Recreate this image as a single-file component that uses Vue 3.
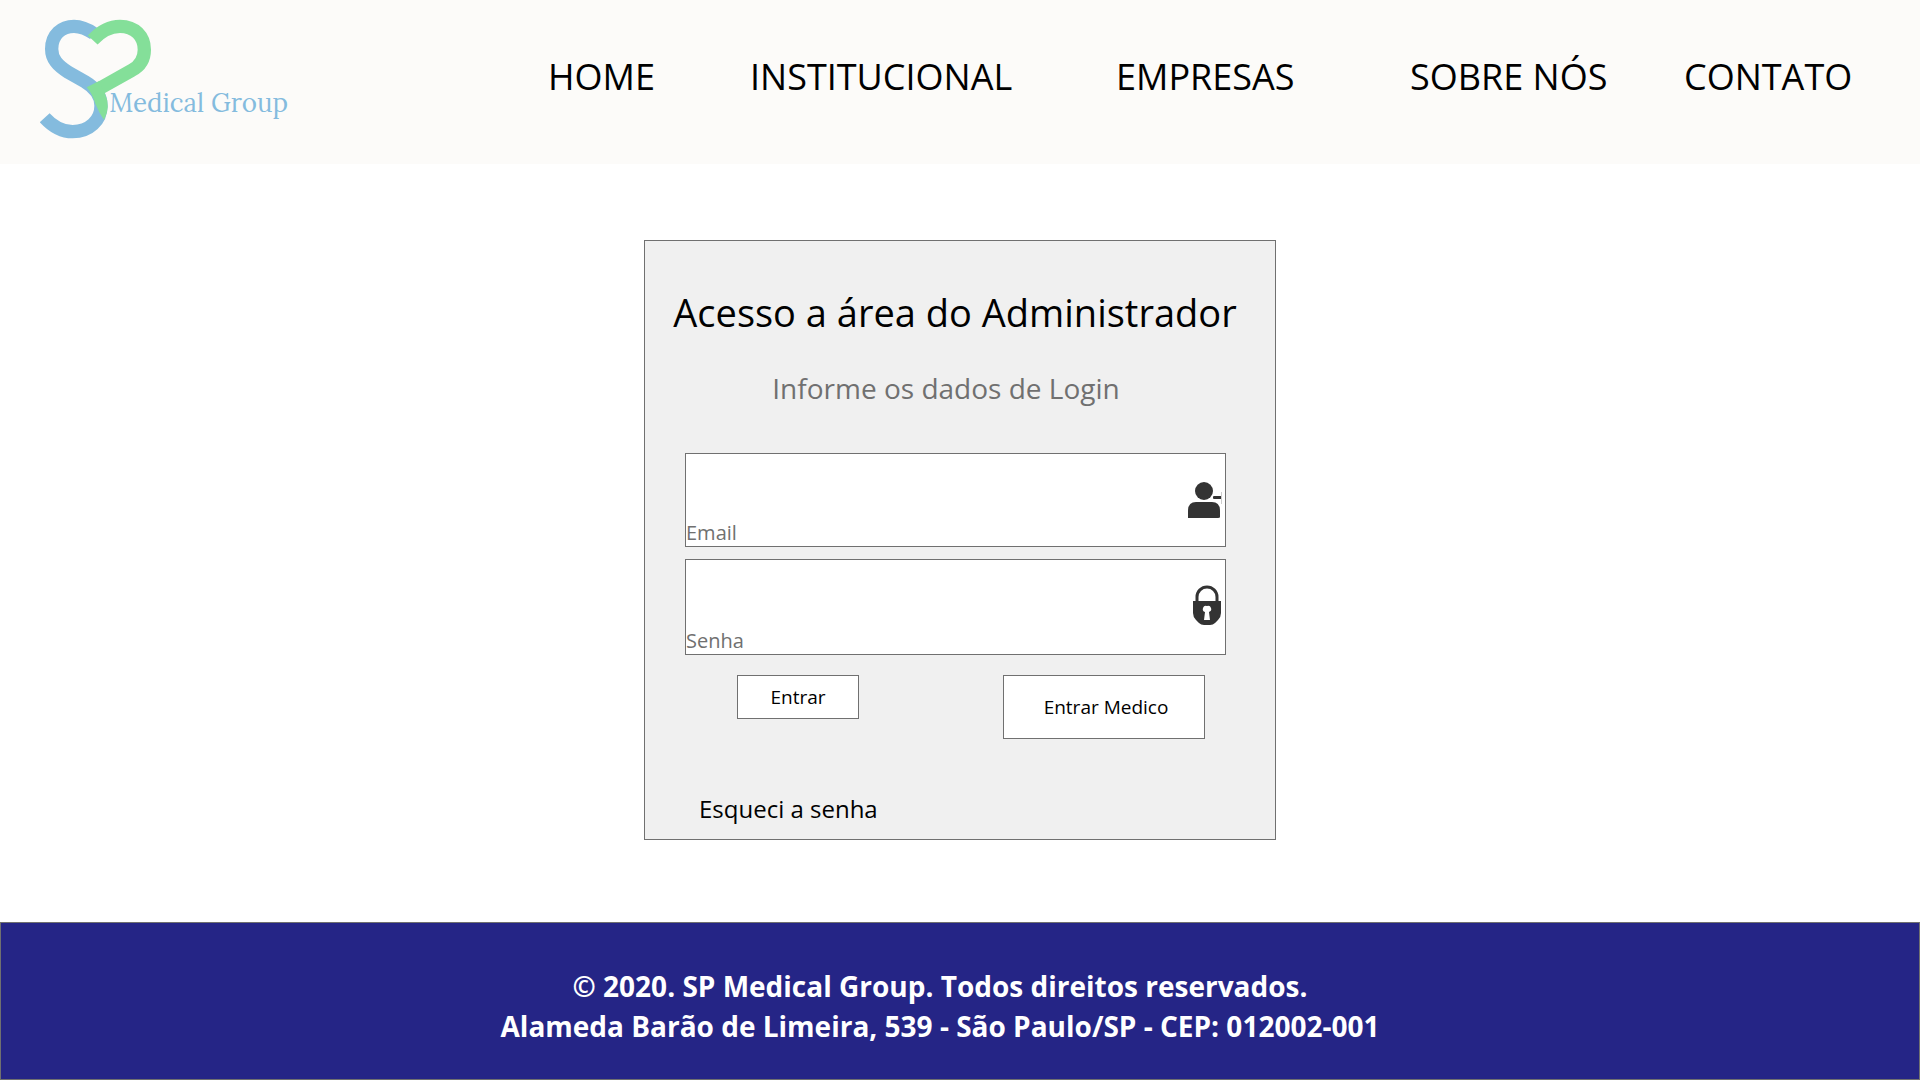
<script setup>
import { ref } from 'vue'

const links = ['HOME', 'INSTITUCIONAL', 'EMPRESAS', 'SOBRE NÓS', 'CONTATO']
const email = ref('')
const senha = ref('')
</script>

<template>
  <div class="page">
    <header class="header">
      <a class="brand" href="#" aria-label="SP Medical Group">
        <svg class="logo" viewBox="60 58 759 360" fill="none">
          <path
            d="M74 354 Q112 396 158 396 C208 396 243 362 243 318 C243 285 222 262 195 246 L145 218 C112 197 95 178 95 148 C95 105 125 80 162 80 C188 80 205 90 222 102"
            stroke="#84bbde" stroke-width="40" />
          <path
            d="M218 121 Q256 80 300 80 C345 80 373 110 373 150 C373 180 358 200 335 212 L225 274"
            stroke="#84df99" stroke-width="40" />
          <path d="M200 263 L236 245 L255 282 Q273 320 252 361 Q238 340 226 312 Q217 282 200 263Z" fill="#84df99" />
          <text class="logo-text" x="268" y="337">Medical Group</text>
        </svg>
      </a>
      <nav class="nav" aria-label="Principal">
        <a v-for="link in links" :key="link" href="#">{{ link }}</a>
      </nav>
    </header>

    <main class="main">
      <form class="card" @submit.prevent>
        <h1 class="title">Acesso a área do Administrador</h1>
        <p class="subtitle">Informe os dados de Login</p>

        <div class="fields">
          <div class="field">
            <input id="email" v-model="email" type="email" autocomplete="username" />
            <label for="email">Email</label>
            <svg class="icon" viewBox="0 0 36 40" fill="#333">
              <circle cx="17" cy="11" r="9" />
              <path d="M1 38V31Q1 22 9 22H25Q33 22 33 31V37Q33 38 31 38H2Z" />
              <path d="M27 16H34V19H27Q26 19 26 18V17Q26 16 27 16Z" />
              <path d="M34 12H35V24H34Z" fill="#ccc" />
            </svg>
          </div>
          <div class="field">
            <input id="senha" v-model="senha" type="password" autocomplete="current-password" />
            <label for="senha">Senha</label>
            <svg class="icon" viewBox="0 0 36 40" fill="#333">
              <path d="M10 17V10A10 10 0 0 1 30 10V17" fill="none" stroke="#333" stroke-width="3" />
              <path
                fill-rule="evenodd"
                d="M6 14H34V26Q34 30 31 33L28 36Q26 38 23 38H17Q14 38 12 36L9 33Q6 30 6 26ZM20 19A3 3 0 0 0 18 25L17 33H23L22 25A3 3 0 0 0 20 19Z" />
            </svg>
          </div>
        </div>

        <div class="actions">
          <button class="btn" type="submit">Entrar</button>
          <button class="btn btn-large" type="button">Entrar Medico</button>
        </div>

        <a class="forgot" href="#">Esqueci a senha</a>
      </form>
    </main>

    <footer class="footer">
      <p>
        © 2020. SP Medical Group. Todos direitos reservados.<br />
        Alameda Barão de Limeira, 539 - São Paulo/SP - CEP: 012002-001
      </p>
    </footer>
  </div>
</template>

<style>
body {
  margin: 0;
  background: #fff;
}
</style>

<style scoped>
.page {
  display: flex;
  flex-direction: column;
  min-height: 100vh;
  font-family: "Trebuchet MS", "Open Sans", sans-serif;
  color: #000;
}

.page * {
  box-sizing: border-box;
}

a {
  color: inherit;
  text-decoration: none;
}

.header {
  display: grid;
  grid-template-columns: 548fr 1372fr;
  height: 164px;
  background: #fcfbf9;
}

.brand {
  padding: 19px 0 0 40px;
}

.logo {
  display: block;
  width: 253px;
  height: 120px;
}

.logo-text {
  font-family: Lora, "Liberation Serif", serif;
  font-size: 78px;
  fill: #84bbde;
}

.nav {
  display: grid;
  grid-template-columns: 202fr 366fr 294fr 274fr 236fr;
  padding-top: 51px;
  font-size: 36px;
  line-height: 52px;
  white-space: nowrap;
}

.main {
  flex: 1;
  padding: 76px 16px 80px;
}

.card {
  display: flex;
  flex-direction: column;
  max-width: 632px;
  min-height: 600px;
  margin: 0 auto;
  padding: 43px 40px 12px;
  border: 1px solid #707070;
  background: #f0f0f0;
}

.title {
  margin: 0 -16px;
  padding-right: 10px;
  font-size: 38px;
  font-weight: 400;
  line-height: 56px;
  text-align: center;
  white-space: nowrap;
}

.subtitle {
  margin: 28px 28px 0 0;
  font-size: 28px;
  line-height: 40px;
  text-align: center;
  color: #707070;
}

.fields {
  display: grid;
  grid-template-rows: 94px 96px;
  gap: 12px;
  margin: 45px 9px 0 0;
}

.field {
  display: grid;
  grid-template-columns: 1fr 36px;
  grid-template-rows: 1fr 26px;
  align-items: center;
  padding-right: 2px;
  border: 1px solid #707070;
  background: #fff;
}

.field input {
  width: 100%;
  height: 100%;
  border: 0;
  padding: 0 8px;
  background: none;
  font: inherit;
  font-size: 20px;
  outline: none;
}

.field label {
  grid-row: 2;
  font-size: 20px;
  line-height: 26px;
  color: #707070;
}

.icon {
  grid-column: 2;
  grid-row: 1 / 3;
  width: 36px;
  height: 40px;
  overflow: visible;
}

.actions {
  display: flex;
  justify-content: space-between;
  align-items: flex-start;
  margin: 20px 30px 0 52px;
}

.btn {
  width: 122px;
  height: 44px;
  padding: 0;
  border: 1px solid #707070;
  background: #fff;
  font: inherit;
  font-size: 19px;
  color: #000;
}

.btn-large {
  width: 202px;
  height: 64px;
  padding-left: 4px;
}

.forgot {
  margin: auto 0 0 14px;
  font-size: 24px;
  line-height: 36px;
}

.footer {
  padding: 43px 40px 33px 0;
  border: 1px solid #707070;
  background: #252586;
  color: #fff;
  font-size: 28px;
  font-weight: 700;
  line-height: 40px;
  text-align: center;
}

.footer p {
  margin: 0;
}
</style>
